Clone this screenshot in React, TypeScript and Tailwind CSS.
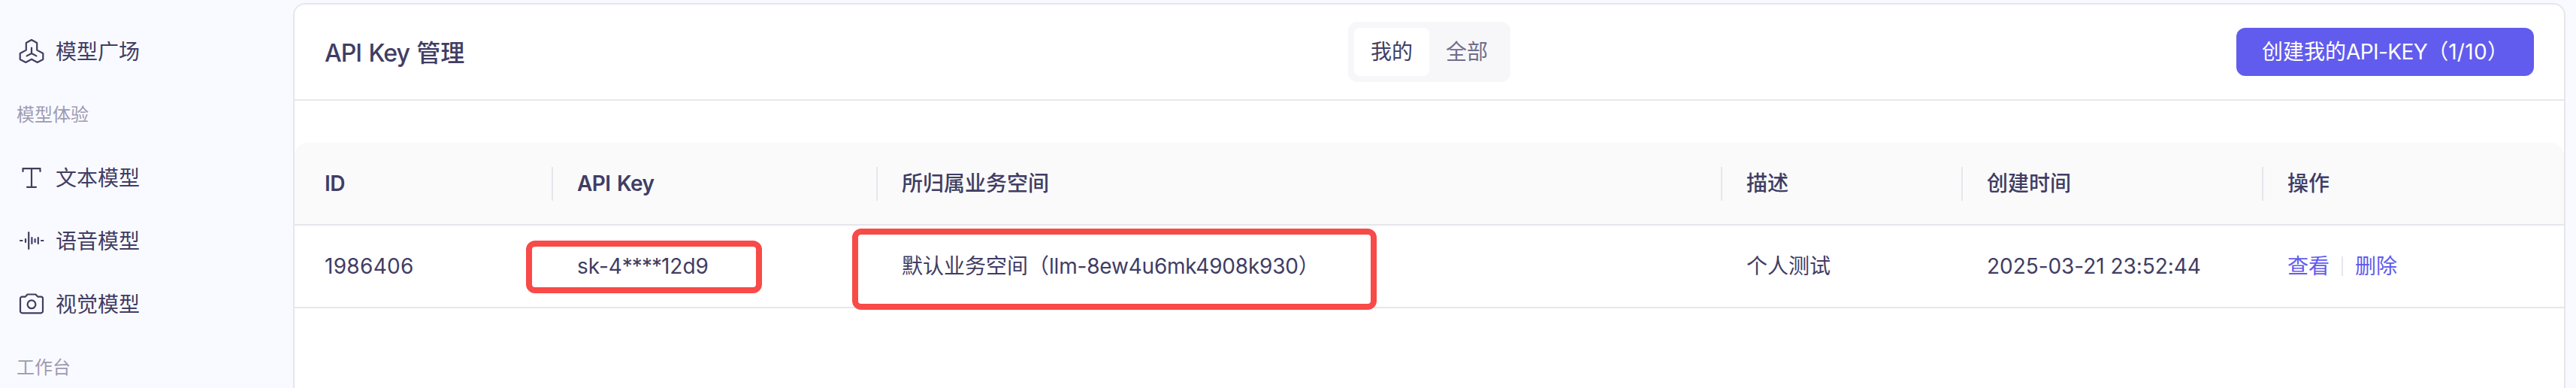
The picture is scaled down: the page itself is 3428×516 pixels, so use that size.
import type { ReactNode } from "react";

const iconProps = {
  width: 36,
  height: 36,
  viewBox: "0 0 36 36",
  fill: "none",
  stroke: "currentColor",
  strokeWidth: 2.2,
  strokeLinecap: "round" as const,
  strokeLinejoin: "round" as const,
};

const PlazaIcon = () => (
  <svg {...iconProps}>
    <path d="M18 3 25.2 7v9.6L33.3 21v8l-7.6 4L18 28.8 10.3 33 2.7 29v-8l8.1-4.400V7Z" />
    <path d="M18 13.500v7.500M18 21l-6.400 3.400M18 21l6.400 3.400" />
  </svg>
);

const TextIcon = () => (
  <svg {...iconProps}>
    <path d="M6.500 10V6.200h23V10M18 6.200v24.600M12 30.800h12" />
  </svg>
);

const AudioIcon = () => (
  <svg {...iconProps}>
    <path d="M3 18h2.500M10 16v4M14.200 7v22M18.400 14v8M22.600 16v4M26.800 14v8M31 18h2.500" />
  </svg>
);

const CameraIcon = () => (
  <svg {...iconProps}>
    <path d="M5.500 8.600h4.300l2.800-3.100h10.800l2.800 3.100h4.300a2.500 2.500 0 0 1 2.500 2.500v16.700a2.500 2.500 0 0 1-2.500 2.500h-25A2.500 2.500 0 0 1 3 27.800V11.100a2.500 2.500 0 0 1 2.500-2.500Z" />
    <circle cx="18" cy="18.800" r="5.400" />
  </svg>
);

const NavItem = ({ icon, label }: { icon: ReactNode; label: string }) => (
  <a className="flex h-[84px] items-center gap-[14px] pl-6">
    {icon}
    <span className="pt-px">{label}</span>
  </a>
);

const NavGroup = ({ label }: { label: string }) => (
  <div className="flex h-[84px] items-center pl-[22px] pt-0.5 text-2xl text-[#9d9bb2]">{label}</div>
);

const columns = "grid grid-cols-[344px_432px_1124px_320px_400px_400px]";

const HeadCell = ({
  children,
  first,
  last,
  latin,
}: {
  children: ReactNode;
  first?: boolean;
  last?: boolean;
  latin?: boolean;
}) => (
  <div className={`flex items-center justify-between ${first ? "pl-10" : "pl-8"}`}>
    <span className={latin ? "font-semibold tracking-[-0.55px] [word-spacing:2px]" : "font-medium"}>{children}</span>
    {!last && <span className="h-[45px] w-0.5 bg-[#e6e6ed]" />}
  </div>
);

const Highlight = ({ className }: { className: string }) => (
  <div className={`pointer-events-none absolute rounded-xl border-8 border-[#f84a47] ${className}`} />
);

export default function App() {
  return (
    <div className="relative flex h-[516px] w-[3428px] overflow-hidden bg-[#f9faff] font-['Inter','Noto_Sans_CJK_SC',sans-serif] text-[28px] leading-[44px] text-[#403d63]">
      <aside className="w-[390px] shrink-0 pt-[26px]">
        <NavItem icon={<PlazaIcon />} label="模型广场" />
        <NavGroup label="模型体验" />
        <NavItem icon={<TextIcon />} label="文本模型" />
        <NavItem icon={<AudioIcon />} label="语音模型" />
        <NavItem icon={<CameraIcon />} label="视觉模型" />
        <NavGroup label="工作台" />
      </aside>

      <main className="mt-1 h-[600px] w-[3024px] shrink-0 rounded-2xl border-2 border-[#e6e6ed] bg-white">
        <header className="grid h-32 grid-cols-[1fr_auto_1fr] items-center border-b-2 border-[#e6e6ed] px-10">
          <h1 className="pt-1 text-[32px] font-medium">
            <span className="tracking-[-1px] [word-spacing:2px]">API Key </span>管理
          </h1>
          <div className="flex h-20 rounded-xl bg-[#f7f7fa] p-2">
            <button className="w-[100px] rounded-lg bg-white">我的</button>
            <button className="w-[100px] text-[#6f6d8b]">全部</button>
          </div>
          <button className="h-16 w-[396px] justify-self-end whitespace-nowrap rounded-xl bg-[#615ced] text-white">
            创建我的<span className="tracking-[-0.6px]">API-KEY</span>（<span className="tracking-[0.3px]">1/10</span>）
          </button>
        </header>

        <section className="pt-14">
          <div className={`${columns} h-[110px] rounded-t-2xl border-b-2 border-[#e6e6ed] bg-[#fafafa]`}>
            <HeadCell first latin>ID</HeadCell>
            <HeadCell latin>API Key</HeadCell>
            <HeadCell>所归属业务空间</HeadCell>
            <HeadCell>描述</HeadCell>
            <HeadCell>创建时间</HeadCell>
            <HeadCell last>操作</HeadCell>
          </div>
          <div className={`${columns} h-[110px] items-center border-b-2 border-[#e6e6ed]`}>
            <div className="pl-10 tracking-[0.3px]">1986406</div>
            <div className="pl-8">
              sk-4<span className="tracking-[-1px]">****</span>12d9
            </div>
            <div className="pl-8">
              默认业务空间（<span className="tracking-[-0.2px]">llm-8ew4u6mk4908k930</span>）
            </div>
            <div className="pl-8">个人测试</div>
            <div className="pl-8 tracking-[-0.05px]">2025-03-21 23:52:44</div>
            <div className="flex items-center gap-4 pl-8 text-[#615ced]">
              <a>查看</a>
              <span className="h-[26px] w-0.5 bg-[#e6e6ed]" />
              <a>删除</a>
            </div>
          </div>
        </section>
      </main>

      <Highlight className="left-[700px] top-[320px] h-[70px] w-[314px]" />
      <Highlight className="left-[1134px] top-[304px] h-[108px] w-[698px]" />
    </div>
  );
}
